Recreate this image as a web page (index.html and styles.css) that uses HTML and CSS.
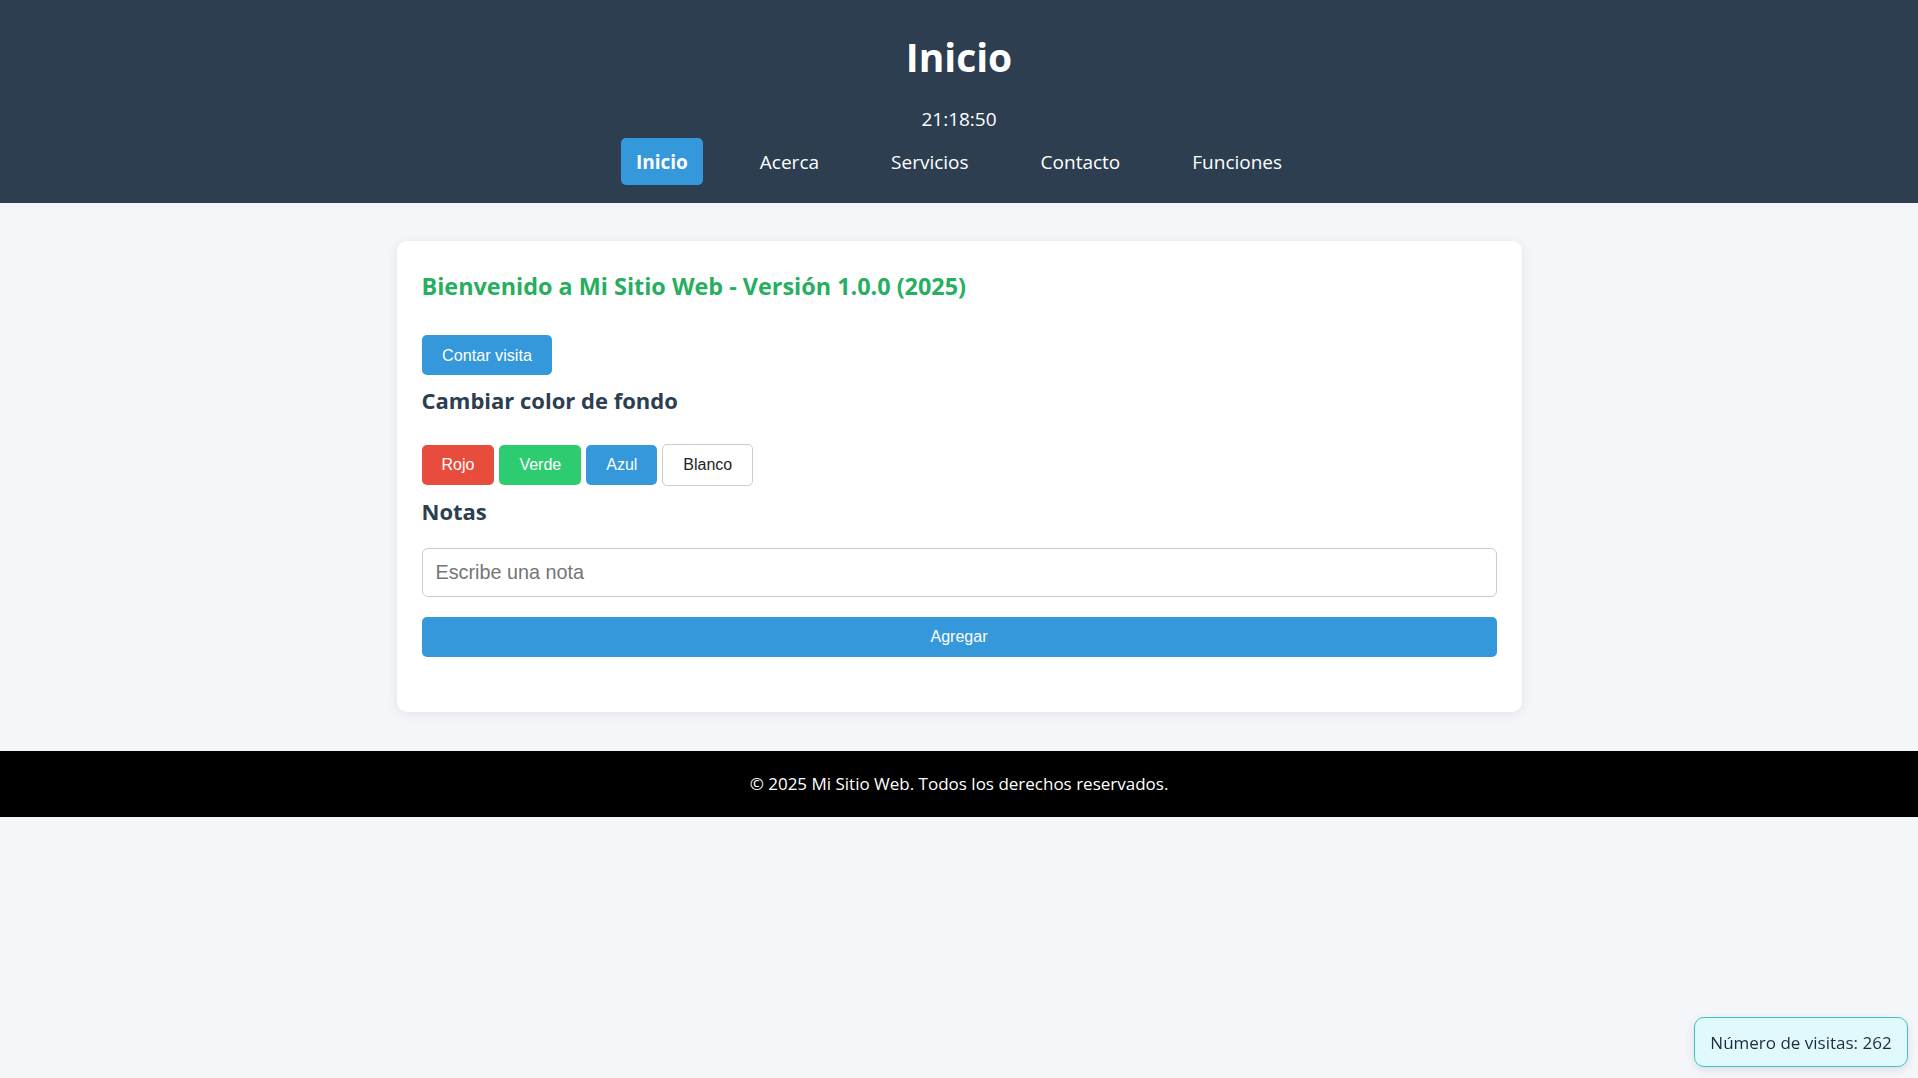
FILE: index.html
```html
<!DOCTYPE html>
<html lang="es">
<head>
<meta charset="utf-8">
<title>Inicio</title>
<link rel="stylesheet" href="styles.css">
</head>
<body>
<header class="site-header">
  <h1 class="site-title">Inicio</h1>
  <div class="clock">21:18:50</div>
  <nav class="nav">
    <a class="nav-link active" href="#">Inicio</a>
    <a class="nav-link" href="#">Acerca</a>
    <a class="nav-link" href="#">Servicios</a>
    <a class="nav-link" href="#">Contacto</a>
    <a class="nav-link" href="#">Funciones</a>
  </nav>
</header>

<main class="card">
  <h2 class="welcome">Bienvenido a Mi Sitio Web - Versión 1.0.0 (2025)</h2>
  <button class="btn btn-blue count-btn">Contar visita</button>

  <h3 class="section-title">Cambiar color de fondo</h3>
  <div class="color-row">
    <button class="btn btn-red">Rojo</button>
    <button class="btn btn-green">Verde</button>
    <button class="btn btn-blue">Azul</button>
    <button class="btn btn-white">Blanco</button>
  </div>

  <h3 class="section-title notes-title">Notas</h3>
  <input class="note-input" type="text" placeholder="Escribe una nota">
  <button class="btn btn-blue add-btn">Agregar</button>
</main>

<footer class="site-footer">© 2025 Mi Sitio Web. Todos los derechos reservados.</footer>

<div class="visits">Número de visitas: 262</div>
</body>
</html>
```

FILE: styles.css
```css
* { box-sizing: border-box; }

html, body {
  margin: 0;
  padding: 0;
}

body {
  background: #f4f6f9;
  font-family: "Open Sans", "Noto Sans", sans-serif;
  color: #2c3e50;
  min-height: 1078px;
}

.site-header {
  background: #2c3e50;
  color: #ffffff;
  text-align: center;
  padding: 33px 0 18px;
}

.site-title {
  margin: 0 0 26px;
  font-size: 39px;
  line-height: 48px;
  font-weight: 700;
}

.clock {
  font-size: 19px;
  line-height: 24px;
  margin-bottom: 7px;
}

.nav {
  display: flex;
  justify-content: center;
  gap: 42px;
}

.nav-link {
  color: #ffffff;
  text-decoration: none;
  font-size: 19px;
  line-height: 27px;
  padding: 11px 15px 9px;
  border-radius: 5px;
}

.nav-link.active {
  background: #3498db;
  font-weight: 700;
}

.card {
  display: block;
  width: 1125px;
  margin: 38px auto 39px;
  background: #ffffff;
  border-radius: 10px;
  box-shadow: 0 2px 12px rgba(0, 0, 0, 0.08);
  padding: 25px 25px 55px;
}

.welcome {
  margin: 0 0 29px;
  font-size: 23.4px;
  line-height: 40px;
  font-weight: 700;
  color: #27ae60;
}

.btn {
  font-family: "Liberation Sans", Arial, sans-serif;
  font-size: 16px;
  line-height: 20px;
  padding: 10px 20px;
  border: none;
  border-radius: 5px;
  color: #ffffff;
  cursor: pointer;
}

.btn-blue { background: #3498db; }
.btn-red { background: #e74c3c; }
.btn-green { background: #2ecc71; }
.btn-white {
  background: #ffffff;
  color: #222222;
  border: 1px solid #cccccc;
}

.count-btn {
  display: block;
  padding: 10px 20.5px;
  font-size: 16.2px;
}

.section-title {
  margin: 10px 0 29px;
  font-size: 22px;
  line-height: 30px;
  font-weight: 700;
  color: #2c3e50;
}

.notes-title { margin-bottom: 22px; }

.color-row {
  display: flex;
  align-items: center;
  gap: 5px;
}

.note-input {
  display: block;
  width: 100%;
  height: 49px;
  padding: 0 13px;
  border: 1px solid #cccccc;
  border-radius: 6px;
  font-family: "Liberation Sans", Arial, sans-serif;
  font-size: 19.8px;
  color: #333333;
  background: #ffffff;
}

.note-input::placeholder { color: #757575; }

.add-btn {
  display: block;
  width: 100%;
  margin-top: 20px;
}

.site-footer {
  background: #000000;
  color: #ffffff;
  text-align: center;
  font-size: 17px;
  line-height: 66px;
}

.visits {
  position: fixed;
  right: 10px;
  bottom: 11px;
  width: 214px;
  height: 50px;
  display: flex;
  align-items: center;
  justify-content: center;
  background: #e0fafb;
  border: 1px solid #3cc4c4;
  border-radius: 10px;
  box-shadow: 0 3px 10px rgba(0, 0, 0, 0.1);
  font-size: 17px;
  color: #1c2a44;
}
```
